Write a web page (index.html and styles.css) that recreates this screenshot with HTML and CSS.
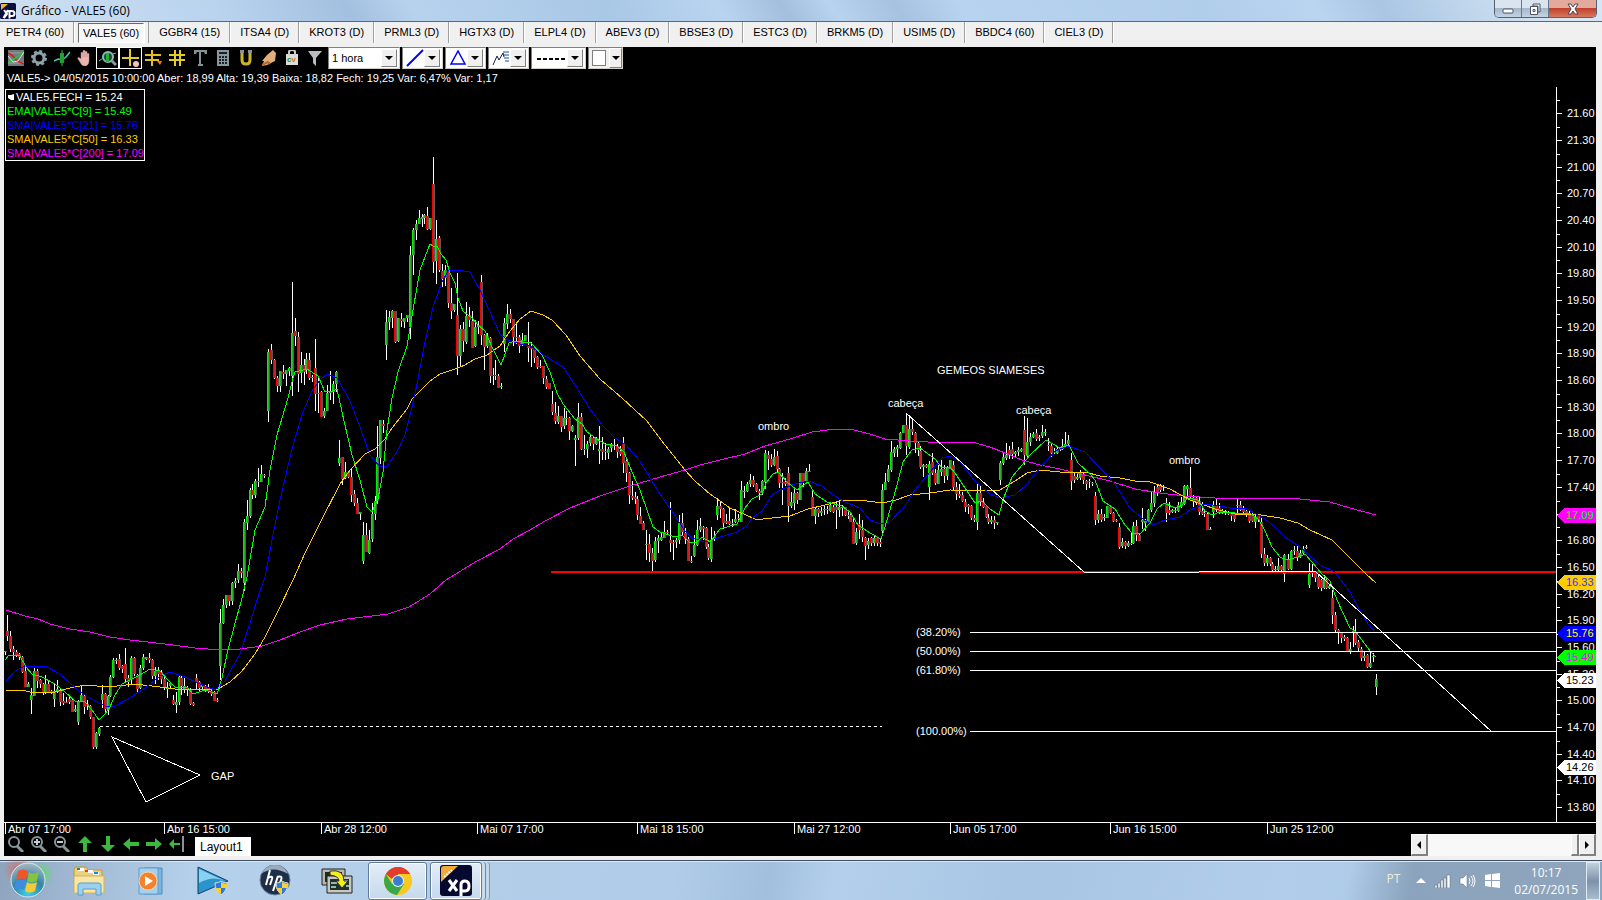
FILE: index.html
```html
<!DOCTYPE html>
<html lang="pt-BR">
<head>
  <meta charset="UTF-8" /><meta name="viewport" content="width=device-width, initial-scale=1.0" />
  <title>Gráfico - VALE5 (60)</title>
  <link rel="stylesheet" href="styles.css">
</head>
<body>
  <header class="titlebar">
    <svg class="xp-logo" width="16" height="16" viewBox="0 0 32 32"><rect width="32" height="32" rx="3" fill="#0b0f3c"/><path d="M2 14V2h14z" fill="#f0b43c"/><path d="M8 14l6 8-6 8M16 14l-9 16M19 31V16h5a5 5 0 010 10h-5" fill="none" stroke="#fff" stroke-width="4"/></svg>
    <h1>Gráfico - VALE5 (60)</h1>
    <div class="winbtns">
      <button aria-label="Minimizar"><svg width="12" height="12"><rect x="1" y="6" width="10" height="4" rx="1" fill="#fff" stroke="#4a5565"/></svg></button>
      <button aria-label="Restaurar"><svg width="12" height="12"><path d="M4 1h7v8H9V3H4z" fill="#fff" stroke="#4a5565"/><path d="M1.500 3.500h7v8h-7zM4 6.500h2v2H4z" fill="#fff" stroke="#4a5565"/></svg></button>
      <button class="close" aria-label="Fechar"><svg width="14" height="12"><path d="M2 1h3l2 3 2-3h3L9 6l3 5H9L7 8l-2 3H2l3-5z" fill="#fff" stroke="#4a4555"/></svg></button>
    </div>
  </header>

  <nav class="tabs">
    <button>PETR4 (60)</button>
    <button class="active">VALE5 (60)</button>
    <button>GGBR4 (15)</button>
    <button>ITSA4 (D)</button>
    <button>KROT3 (D)</button>
    <button>PRML3 (D)</button>
    <button>HGTX3 (D)</button>
    <button>ELPL4 (D)</button>
    <button>ABEV3 (D)</button>
    <button>BBSE3 (D)</button>
    <button>ESTC3 (D)</button>
    <button>BRKM5 (D)</button>
    <button>USIM5 (D)</button>
    <button>BBDC4 (60)</button>
    <button>CIEL3 (D)</button>
  </nav>

  <main class="panel">
    <div class="toolbar">
      <button aria-label="Gráfico"><svg width="16" height="16"><rect width="16" height="16" fill="#6f7b80"/><path d="M0 3h16M0 13h16" stroke="#9aa5aa"/><path d="M0 3l4 2 5 6 7 3" fill="none" stroke="#e11" stroke-width="1.500"/><path d="M0 12l5-2 5-4 6-4" fill="none" stroke="#2c2" stroke-width="1.500"/><path d="M0 6l5 6 5-1 6-9" fill="none" stroke="#ddd"/></svg></button>
      <button aria-label="Configurar"><svg width="16" height="16"><circle cx="8" cy="8" r="5" fill="none" stroke="#8fa3ad" stroke-width="3"/><circle cx="8" cy="8" r="7" fill="none" stroke="#8fa3ad" stroke-width="2" stroke-dasharray="3 2.500"/></svg></button>
      <button aria-label="Candle"><svg width="16" height="16"><path d="M0 11l4-2 4 1 4-3 4-5" fill="none" stroke="#3ad0c0" stroke-width="1.500"/><path d="M8 0v16" stroke="#3b4"/><rect x="6" y="3" width="4" height="10" fill="#1fa030"/></svg></button>
      <button aria-label="Mover"><svg width="16" height="16"><path d="M4 9V3c0-1 2-1 2 0V1c0-1 2-1 2 0v1c0-1 2-1 2 0v2c0-1 2-1 2 0v7c0 3-2 5-4 5-3 0-4-2-5-4L1 9c-1-2 1-2 3 0z" fill="#e9b6b2" stroke="#c58884" stroke-width=".5"/><path d="M6 3v4M8 2v5M10 4v3" stroke="#b9807c" stroke-width=".6"/></svg></button>
      <button class="on" aria-label="Zoom do candle"><svg width="18" height="16"><circle cx="9" cy="7" r="5" fill="#27414a" stroke="#8ba" stroke-width="2"/><path d="M13 11l4 4" stroke="#8a9aa0" stroke-width="3"/><path d="M0 11l4-3M14 4l3-1" stroke="#3ad0c0"/><rect x="7" y="3" width="3" height="9" fill="#24b034"/></svg></button>
      <button class="on" aria-label="Cruz"><svg width="18" height="18"><path d="M8 0v17M0 9h17" stroke="#e3cf2c" stroke-width="2"/><circle cx="14" cy="15" r="3" fill="#eec4c0"/></svg></button>
      <button aria-label="Linhas"><svg width="18" height="16"><path d="M7 0v16M0 5h16M0 10h14" stroke="#e3bf22" stroke-width="2"/><path d="M12 11h5l-2 4z" fill="#f71"/></svg></button>
      <button aria-label="Grade"><svg width="16" height="16"><path d="M6 0v16M11 0v16M0 5h16M0 10h16" stroke="#e3cf22" stroke-width="2"/></svg></button>
      <button aria-label="Texto"><svg width="16" height="16"><path d="M2 0h13v4h-2l-1-2H9v12h2v2H6v-2h1V2H5L4 4H2z" fill="#849298"/></svg></button>
      <button aria-label="Calculadora"><svg width="14" height="16"><rect x="1" width="12" height="16" fill="#8b979c"/><path d="M3 2h8v2H3zM3 6h2v2H3zM6 6h2v2H6zM9 6h2v2H9zM3 9h2v2H3zM6 9h2v2H6zM9 9h2v2H9zM3 12h2v2H3zM6 12h2v2H6zM9 12h2v2H9z" fill="#182226"/></svg></button>
      <button aria-label="Ímã"><svg width="14" height="16"><path d="M3 3v7q0 4 4 4t4-4V3" fill="none" stroke="#cfb526" stroke-width="3"/><path d="M1 0h4v3H1zM9 0h4v3H9z" fill="#8a9194"/></svg></button>
      <button aria-label="Apagar"><svg width="16" height="16"><path d="M1 11l5-6 6-5 3 3-1 8-8 4-5 1 2-5z" fill="#e3ae7a"/><path d="M1 15l6-3 2 2" fill="none" stroke="#b06a30" stroke-width="2"/></svg></button>
      <button class="sale" aria-label="Compra e venda"><svg width="14" height="16"><path d="M1 4h12v11H1z" fill="#dcdcd6"/><path d="M4 5V2q0-2 3-2t3 2v3" fill="none" stroke="#ccc" stroke-width="2"/></svg><span><b>c</b><i>v</i></span></button>
      <button aria-label="Filtro"><svg width="16" height="16"><path d="M1 1h14L9 8v8l-3-3V8z" fill="#b9bdbf"/></svg></button>
      <label class="combo period"><select aria-label="Período"><option>1 hora</option></select><i class="arrow"></i></label>
      <button class="combo" aria-label="Linha"><svg width="18" height="18"><path d="M1 17L17 1" stroke="#00f" stroke-width="2"/></svg><i class="arrow"></i></button>
      <button class="combo" aria-label="Forma"><svg width="18" height="18"><path d="M2 15h14L9 2z" fill="none" stroke="#00f" stroke-width="1.500"/></svg><i class="arrow"></i></button>
      <button class="combo" aria-label="Estudo"><svg width="18" height="18"><path d="M1 16l4-9 2 4 4-7 1 4" fill="none" stroke="#124" /><path d="M11 3h6M12 6h5M12 9h5M13 12h4" stroke="#124a9c"/></svg><i class="arrow"></i></button>
      <button class="combo wide" aria-label="Traço"><svg width="32" height="18"><path d="M2 10h30" stroke="#000" stroke-width="2" stroke-dasharray="4 2"/></svg><i class="arrow"></i></button>
      <button class="combo color" aria-label="Cor"><span class="swatch"></span><i class="arrow"></i></button>
    </div>
    <p class="quote">VALE5-&gt; 04/05/2015 10:00:00 Aber: 18,99 Alta: 19,39 Baixa: 18,82 Fech: 19,25 Var: 6,47% Var: 1,17</p>

    <div class="chart">
      <svg id="plot" viewBox="4 86 1592 748"></svg>
      <ul class="legend">
        <li><svg width="9" height="10"><path d="M1 3h3l3-1v6H4L1 6z" fill="#fff"/></svg>VALE5.FECH = 15.24</li>
        <li class="ema9">EMA|VALE5*C[9] = 15.49</li>
        <li class="sma21">SMA|VALE5*C[21] = 15.76</li>
        <li class="sma50">SMA|VALE5*C[50] = 16.33</li>
        <li class="sma200">SMA|VALE5*C[200] = 17.09</li>
      </ul>
    </div>

    <div class="bottombar">
      <button aria-label="Lupa"><svg width="17" height="16"><circle cx="7" cy="6" r="5" fill="none" stroke="#8a9599" stroke-width="2"/><path d="M10 10l6 6" stroke="#8a9599" stroke-width="3"/></svg></button>
      <button aria-label="Aumentar"><svg width="17" height="16"><circle cx="7" cy="6" r="5" fill="none" stroke="#8a9599" stroke-width="2"/><path d="M10 10l6 6" stroke="#8a9599" stroke-width="3"/><path d="M4 6h6M7 3v6" stroke="#c3cccf" stroke-width="2"/></svg></button>
      <button aria-label="Diminuir"><svg width="17" height="16"><circle cx="7" cy="6" r="5" fill="none" stroke="#8a9599" stroke-width="2"/><path d="M10 10l6 6" stroke="#8a9599" stroke-width="3"/><path d="M4 6h6" stroke="#c3cccf" stroke-width="2"/></svg></button>
      <button aria-label="Subir"><svg width="16" height="16"><path d="M8 0l7 7h-5v9H6V7H1z" fill="#3db83f"/></svg></button>
      <button aria-label="Descer"><svg width="16" height="16"><path d="M8 16l7-7h-5V0H6v9H1z" fill="#3db83f"/></svg></button>
      <button aria-label="Esquerda"><svg width="16" height="16"><path d="M0 8l7-6v4h9v4H7v4z" fill="#3db83f"/></svg></button>
      <button aria-label="Direita"><svg width="16" height="16"><path d="M16 8L9 2v4H0v4h9v4z" fill="#3db83f"/></svg></button>
      <button aria-label="Fim"><svg width="16" height="16"><path d="M0 8l5-5v4h6v2H5v4z" fill="#3db83f"/><path d="M14 0v16" stroke="#8a9599" stroke-width="2"/></svg></button>
      <button class="layout">Layout1</button>
      <div class="scroll">
        <button aria-label="Rolar à esquerda"><svg width="6" height="8"><path d="M5 0v8L1 4z"/></svg></button>
        <span class="thumb"></span>
        <button aria-label="Rolar à direita"><svg width="6" height="8"><path d="M1 0v8l4-4z"/></svg></button>
      </div>
    </div>
  </main>

  <footer class="taskbar">
    <button class="start" aria-label="Iniciar"><svg width="56" height="39" viewBox="0 0 56 39">
      <defs>
        <radialGradient id="orb" cx=".5" cy=".9" r=".9"><stop offset="0" stop-color="#3fd0e8"/><stop offset=".5" stop-color="#2f86a8"/><stop offset="1" stop-color="#a9b9c4"/></radialGradient>
        <radialGradient id="glow"><stop offset="0" stop-color="#f05030"/><stop offset="1" stop-color="#f05030" stop-opacity="0"/></radialGradient>
        <radialGradient id="glow2"><stop offset="0" stop-color="#40f040"/><stop offset="1" stop-color="#40f040" stop-opacity="0"/></radialGradient>
      </defs>
      <circle cx="18" cy="9" r="16" fill="url(#glow)" opacity=".6"/><circle cx="40" cy="13" r="13" fill="url(#glow2)" opacity=".7"/>
      <circle cx="27" cy="19" r="17" fill="url(#orb)" stroke="#dbe8ee"/>
      <path d="M17 10q5-3 10 0l-2 9q-5-3-10 0z" fill="#f0562a"/><path d="M28 11q4 3 10 0l-2 9q-6 3-10 0z" fill="#84c440"/>
      <path d="M15 20q5-3 10 0l-2 9q-5-3-10 0z" fill="#3e8ee0"/><path d="M26 21q4 3 10 0l-2 9q-6 3-10 0z" fill="#fac832"/>
    </svg></button>
    <button class="app" aria-label="Explorador"><svg width="32" height="30"><path d="M1 4q0-3 3-3h9l2 3h14v22H1z" fill="#ecd07c" stroke="#c09840"/><path d="M5 2h6v3H5zM15 4h5v3h-5zM20 6h6v3h-6z" fill="#fff"/><path d="M4 2h3v2H4z" fill="#1a9a3a"/><path d="M12 4h3v2h-3z" fill="#e33"/><path d="M21 6h4v2h-4z" fill="#28c"/><path d="M1 10h30v17H1z" fill="#f7e6a6" stroke="#d3b35c"/><path d="M5 29V19q0-2 3-2h17q3 0 3 2v10h-5v-6H10v6z" fill="#9cd0ee" stroke="#5d9dc8"/></svg></button>
    <button class="app" aria-label="Media Player"><svg width="32" height="30"><path d="M9 2h18v26H9z" fill="#7fb4dc" stroke="#4a8cc0"/><path d="M4 2h19v26H4z" fill="#a8d0ee" stroke="#5a9ccc"/><circle cx="13" cy="15" r="9" fill="#f5812a" stroke="#fbd2a8"/><path d="M10 10l8 5-8 5z" fill="#fff"/></svg></button>
    <button class="app" aria-label="Player"><svg width="32" height="30"><path d="M1 1l30 14L1 28z" fill="#2a94cc" stroke="#1b3f60"/><path d="M2 3l26 12q-12-6-26 2z" fill="#8ad0f0"/><path d="M18 17q4 0 6-2 3 2 6 2 0 8-6 12-6-4-6-12z" fill="#2a7ae0" stroke="#ddd"/><path d="M24 16v6h5.500q1-2 1-4-3 0-6.500-2zM18.500 22H24v6q-5-2-5.500-6z" fill="#f8d030"/></svg></button>
    <button class="app" aria-label="HP"><svg width="32" height="32"><circle cx="16" cy="15" r="15" fill="#1d2f48" stroke="#6c7f96"/><path d="M2 9q12-9 27 0-4-9-13-9T2 9z" fill="#9aacbe"/><path d="M11 5L7 20M9 13q5-3 4 1l-2 6M19 11l-5 15M18 12q6-2 4 3-1 5-6 4" fill="none" stroke="#fff" stroke-width="2"/><path d="M17 18q4 0 6-2 3 2 6 2 0 8-6 12-6-4-6-12z" fill="#2a7ae0" stroke="#ddd"/><path d="M23 17v6h5.500q1-2 1-4-3 0-6.500-2zM17.500 23H23v6q-5-2-5.500-6z" fill="#f8d030"/></svg></button>
    <button class="app" aria-label="Conexão"><svg width="32" height="28"><path d="M1 2h23v16H1z" fill="#b8b8b0" stroke="#222"/><path d="M4 5h17v10H4z" fill="#1b2b22"/><path d="M6 9h25v17H6z" fill="#c8c8c0" stroke="#222"/><path d="M9 12h19v11H9z" fill="#1b3328"/><path d="M10 16h6M10 20h5M23 14h4M25 19h3" stroke="#cdd" stroke-width="1.500"/><path d="M9 4q14-2 14 10h4l-6 7-6-7h3q0-5-9-6z" fill="#f7ee20" stroke="#333"/></svg></button>
    <button class="app open" aria-label="Chrome"><svg width="30" height="30" viewBox="0 0 30 30"><circle cx="15" cy="15" r="14" fill="#f6c820"/><path d="M15 15L2.900 8A14 14 0 0127.100 8H15z" fill="#e33b2e"/><path d="M2.900 8A14 14 0 0014 29l7-11-6-3-6 3z" fill="#3aa648"/><path d="M2.900 8A14 14 0 0127.100 8H15q-5 1-6 5z" fill="#e33b2e"/><circle cx="15" cy="15" r="6" fill="#eef3f8"/><circle cx="15" cy="15" r="5" fill="#3a7cd4"/></svg></button>
    <button class="app open stack" aria-label="XP"><svg width="32" height="32" viewBox="0 0 32 32"><rect width="32" height="31" rx="3" fill="#06092e"/><path d="M1 17V4q0-3 3-3h14z" fill="#f0ab38"/><path d="M4 12l8-7" stroke="#fff" stroke-width="2" stroke-dasharray="2 1"/><path d="M9 15l8 11M17 15L9 26M21 31V20q0-4 4-4t4 5-4 5h-3" fill="none" stroke="#fff" stroke-width="3"/></svg></button>
    <div class="tray">
      <span class="lang">PT</span>
      <svg width="10" height="6"><path d="M0 5h10L5 0z" fill="#fff"/></svg>
      <svg width="17" height="14"><path d="M1 11h2v3H1zM4 9h2v5H4zM7 6h2v8H7zM10 4h2v10h-2zM13 1h3v13h-3z" fill="#fff" stroke="#5d6b7a" stroke-width=".5"/></svg>
      <svg width="17" height="16"><path d="M1 5h3l4-4v14l-4-4H1z" fill="#fff" stroke="#5d6b7a" stroke-width=".5"/><path d="M10 5q2 3 0 6M12 3q4 5 0 10M14 2q4 6 0 12" fill="none" stroke="#fff"/></svg>
      <svg width="17" height="17"><path d="M1 3l6-1v6H1zM8 2l8-1v7H8zM1 9h6v6l-6-1zM8 9h8v7l-8-1z" fill="#fff"/></svg>
      <time class="clock">10:17<br>02/07/2015</time>
      <button class="desktop" aria-label="Mostrar área de trabalho"></button>
    </div>
  </footer>

  <script src="chart.js"></script>
</body>
</html>
```
FILE: styles.css
```css
* { box-sizing: border-box; }
body { margin: 0; height: 100vh; display: flex; flex-direction: column; background: #f0f0f0; font: 11px "Liberation Sans", Arial, sans-serif; color: #000; overflow: hidden; }
button { font: inherit; color: inherit; border: 0; padding: 0; background: none; display: flex; align-items: center; justify-content: center; }
svg { flex: none; display: block; }

.titlebar { display: flex; height: 22px; flex: none; border-bottom: 1px solid #59677a; background: linear-gradient(60deg, #cfe0f2 0, #b9d3ee 14%, #a3c0e0 22%, #b7d2ed 26%, #a9c8e6 38%, #b9d4ef 45%, #a2bfdd 49%, #b8d3ee 52%, #a5c2e0 56%, #b7d3ef 60%, #b0cdea 75%, #b9d5f0 82%, #a9c6e3 86%, #d7e6f5 97%); }
.xp-logo { margin-top: 3px; }
.titlebar h1 { flex: 1; margin: 0 0 0 5px; font: 12px/21px "Open Sans", sans-serif; }
.winbtns { display: flex; height: 18px; margin-right: 5px; border: 1px solid #52606f; border-top: 0; border-radius: 0 0 5px 5px; overflow: hidden; }
.winbtns button { width: 27px; background: linear-gradient(#d9e4ef 45%, #a5b7ca 50%, #c3d3e2); border-right: 1px solid #66788a; }
.winbtns .close { width: 47px; border: 0; background: linear-gradient(#e3a99c 45%, #c0412b 50%, #d9775c); }

.tabs { display: flex; height: 25px; flex: none; padding-bottom: 4px; }
.tabs button { padding: 0 9px 2px; border-right: 1px solid #a0a0a0; box-shadow: 1px 0 #fff; }
.tabs button:first-child { padding-left: 6px; }
.tabs .active { margin: 1px 4px 0; padding: 0 4px; border: 1px solid #696969; border-right-color: #fff; border-bottom-color: #fff; background: #f8f8f8; }
.tabs .active + button { border-left: 1px solid #a0a0a0; }
.tabs .active ~ button { padding-left: 10px; }

.panel { flex: 1; min-height: 0; display: flex; flex-direction: column; margin: 0 6px 4px 4px; background: #000; color: #fff; }
.toolbar { display: flex; height: 23px; flex: none; }
.toolbar > button { width: 23px; height: 22px; }
.toolbar .on { border: 1px solid #fff; }
.sale { display: grid; }
.sale svg, .sale span { grid-area: 1 / 1; justify-self: center; }
.sale span { font: bold 8px/8px "Liberation Sans", sans-serif; padding-top: 3px; }
.sale b { color: #2a8a3a; }
.sale i { color: #d08020; font-style: normal; }
.toolbar .combo { display: flex; justify-content: space-between; width: 41px; height: 22px; margin-left: 2px; padding: 0 2px 0 3px; background: #fff; border: 1px solid #808080; border-right-color: #d4d0c8; border-bottom-color: #d4d0c8; color: #000; }
.toolbar .period { width: 72px; padding-left: 0; align-items: center; }
.toolbar .wide { width: 55px; }
.toolbar .color { width: 35px; background: #f0f0f0; padding: 0 0 0 3px; }
.period select { flex: 1; min-width: 0; appearance: none; border: 0; background: none; padding: 0 3px; font: 11px "Liberation Sans", sans-serif; color: #000; }
.arrow { width: 16px; height: 18px; flex: none; display: flex; align-items: center; justify-content: center; background: #f0f0f0; border: 1px solid #fff; border-right-color: #808080; border-bottom-color: #808080; }
.arrow::after { content: ""; border: 4px solid transparent; border-top-color: #000; border-bottom: 0; }
.color .arrow { width: 13px; height: 20px; }
.swatch { width: 14px; height: 16px; background: #fff; border: 1px solid #808080; }
.quote { margin: 0; height: 16px; flex: none; padding-left: 3px; line-height: 16px; }

.chart { position: relative; flex: 1; min-height: 0; }
.chart > svg { width: 100%; height: 100%; }
.chart text { fill: #fff; font: 11px "Liberation Sans", Arial, sans-serif; }
.chart line, .chart rect, .chart polyline, .chart polygon { shape-rendering: crispEdges; }
.legend { position: absolute; top: 3px; left: 1px; margin: 0; padding: 0 0 0 1px; list-style: none; border: 1px solid #fff; background: #000; line-height: 14px; }
.legend li { display: flex; align-items: center; }
.ema9 { color: #0f0; }
.sma21 { color: #00f; }
.sma50 { color: #fc0; }
.sma200 { color: #f0f; }

.bottombar { display: flex; height: 22px; flex: none; }
.bottombar > button { width: 23px; height: 20px; }
.bottombar .layout { width: auto; height: 19px; margin: 3px 0 0 7px; padding: 0 8px 0 5px; background: #fff; color: #000; font-size: 12px; }
.scroll { display: flex; width: 185px; margin-left: auto; background: #f8f8f8; }
.scroll button, .thumb { width: 17px; background: #f0f0f0; border: 1px solid #fff; border-right: 2px solid #808080; border-bottom: 2px solid #808080; }
.thumb { width: 8px; margin-left: auto; }

.taskbar { display: flex; height: 40px; flex: none; border-top: 1px solid #3f4f60; box-shadow: inset 0 1px #dbe8f5; background: linear-gradient(100deg, #8ea4bd 0, #9db5d0 4%, #b5d0ea 12%, #b0cce8 42%, #a2c0de 48%, #b3cfeb 52%, #a8c6e4 64%, #b1cdeb 80%, #aecbe8 84%, #8ba3bc 88%, #8fa5bd 100%); }
.start { width: 58px; }
.app { width: 62px; }
.app.open { width: 59px; margin: 1px 3px 0 0; border: 1px solid #5f7a96; border-radius: 3px; background: linear-gradient(#e3edf7, #c5d9ed); box-shadow: inset 0 0 0 1px #fff; }
.app.stack { width: 52px; box-shadow: inset 0 0 0 1px #fff, 3px 0 #c9dcee, 4px 0 #6f88a2, 7px 0 #c3d7ea, 8px 0 #8098b0; }
.tray { margin-left: auto; display: flex; align-items: center; color: #fff; gap: 8px; }
.lang { margin: 0 8px 4px 0; font: 12px "Open Sans", sans-serif; color: #e9eede; }
.clock { margin-left: 5px; text-align: center; font: 12px/17px "Open Sans", sans-serif; }
.desktop { width: 14px; height: 38px; margin-right: 2px; border: 1px solid #e0eaf3; background: linear-gradient(#c3d0dd, #7d92aa 50%, #a9bccf); }
```
FILE: chart.js
```js
const plot = document.getElementById('plot');

// each bar: colour, high, body top, body bottom, low
const BAR_STEP = 71 / 24;
const series = [
  [5, 'g 651 651 652 655'],
  [7, 'r 615 631 636 641,r 631 636 649 652,r 646 649 652 660,r 650 652 655 657,r 653 654 657 660,r 656 657 672 673,r 667 671 687 687,g 682 684 687 687,g 688 695 700 714,g 668 671 696 696,r 669 671 681 688,r 679 680 684 688,r 683 684 693 695,g 675 684 693 694,r 680 684 692 693,r 690 691 693 694,g 683 691 699 707,g 680 689 692 693,r 688 690 702 706,r 693 701 703 705,r 697 702 703 703,r 696 699 702 704'],
  [72, 'r 698 700 712 712,g 705 709 711 712,g 700 701 722 725,g 686 695 701 702,r 695 696 707 714,r 700 704 706 710,r 705 706 717 719,r 717 717 747 749,g 732 733 747 749,g 727 728 734 736,g 685 694 700 708,r 693 694 709 712,g 695 696 710 715,g 675 677 696 697,g 658 660 677 678,g 658 660 661 664,r 654 659 668 670,r 665 666 669 673,r 648 664 679 683,r 675 678 682 687,g 656 658 679 684,r 657 658 674 676,r 674 675 689 692,g 665 668 688 689'],
  [143, 'g 654 657 668 670,g 657 657 659 660,r 653 658 660 663,r 659 660 676 679,g 667 671 676 684,r 667 671 674 680,r 670 672 679 684,r 677 679 688 690,g 682 687 689 698,g 682 683 686 688,r 695 700 704 705,g 692 702 705 713,g 675 677 702 705,r 676 678 686 695,g 678 686 690 693,r 686 688 690 696,r 688 690 704 705,r 702 703 705 706,r 674 678 682 690,r 681 682 688 692,g 684 685 687 690,r 685 686 690 692,r 684 688 691 693,r 690 691 694 696'],
  [214, 'r 691 692 701 701,r 698 700 701 702,g 609 623 666 680,g 599 605 623 624,g 595 595 605 608,r 595 595 601 606,g 582 583 601 605,g 578 581 583 588,g 564 571 580 583,r 568 571 573 578,g 519 522 583 591,g 500 516 523 530,g 488 490 516 518,r 484 490 495 499,g 479 481 495 498,r 468 481 482 487,g 465 474 482 482,r 474 475 476 478'],
  [268, 'g 349 352 411 422,r 344 350 360 364,r 359 360 378 379,r 376 378 386 392,g 371 371 386 392,r 365 372 374 379,g 370 370 374 386,g 367 368 371 376,g 282 333 376 396,r 318 331 336 346,r 332 337 374 392,g 352 365 373 383,r 359 365 372 385,g 353 359 370 374,r 353 360 378 380,r 375 377 378 382,r 339 368 394 411,r 376 393 394 413,r 391 392 417 417,g 408 411 416 418,g 385 393 411 411,g 371 392 393 400,g 381 384 392 404,g 371 372 384 392'],
  [339, 'g 440 458 463 466,r 457 457 479 485,g 462 472 478 479,r 471 472 477 478,r 469 477 495 502,r 490 494 503 506,r 498 503 514 514,g 512 512 514 520,g 522 535 561 564,r 523 535 552 552,g 530 540 553 554,g 503 514 539 542,g 496 501 514 520,g 426 457 501 504,g 420 420 458 464,r 420 424 426 433'],
  [386, 'g 310 322 345 360,g 311 317 322 330,g 310 311 318 328,r 311 311 342 343,g 318 318 341 342,r 313 319 321 327,g 318 318 322 328,g 315 315 318 322,g 246 255 327 339,g 228 230 255 275,g 220 224 230 240,g 210 218 224 224,g 214 217 219 227,g 214 215 218 224,r 207 216 229 230,g 218 218 229 230,r 157 184 262 273,g 220 239 261 284,r 236 238 270 272,r 264 271 279 287,g 265 270 278 286,r 270 271 303 308,r 288 303 311 319,g 304 304 310 312'],
  [457, 'r 273 315 356 375,g 325 329 356 366,r 322 329 341 352,g 302 316 342 344,r 307 315 320 327,r 311 321 348 348,g 320 327 346 347,g 321 325 327 334,r 275 282 335 345,r 334 335 347 370,g 333 336 346 348,r 337 338 376 383,r 368 375 376 385,r 360 375 376 380,r 374 376 388 388,g 383 386 387 389,g 318 323 344 352,g 304 314 324 329,r 309 314 319 323,r 319 319 337 346,r 323 337 338 344,r 335 337 346 353,g 333 340 345 346,g 335 335 341 341'],
  [528, 'r 322 346 348 362,r 342 348 349 367,r 349 349 358 363,r 356 357 367 369,r 360 366 367 368,r 366 366 378 384,r 376 379 387 389,r 383 383 389 389,r 391 404 412 415,r 402 413 421 424,g 406 416 422 424,r 416 416 427 432,g 408 418 426 429,g 411 418 419 425,r 417 418 431 440,g 425 426 431 432,g 435 438 440 466,g 403 417 438 440,r 413 417 449 450,r 435 449 450 455,g 441 444 449 458,g 434 437 443 446,r 436 438 444 450,g 437 438 444 445'],
  [599, 'g 426 449 451 464,r 437 449 452 460,r 443 451 452 460,g 447 449 453 459,g 443 444 448 452,r 439 445 446 450,r 444 446 452 458,r 446 451 454 456,r 437 444 463 473,r 458 461 473 482,r 472 473 495 504,r 481 496 498 500,r 492 497 499 504,r 496 499 515 520,r 507 516 524 524,r 521 523 530 530,g 530 544 545 560,r 534 544 553 562,r 548 553 561 571,g 537 541 560 562,g 535 538 541 553,g 533 537 540 541,g 521 532 538 538,r 530 532 533 535'],
  [670, 'r 502 540 543 552,r 540 542 543 560,g 538 540 542 548,g 515 523 540 544,r 513 523 532 535,r 528 533 539 544,r 537 539 561 561,r 556 561 562 563,g 535 545 556 557,g 520 530 545 546,g 518 526 530 532,r 526 527 529 540,r 527 528 547 549,r 544 547 558 560,g 527 540 559 562,g 531 537 539 541,g 498 506 515 520,r 502 506 509 518,r 508 509 523 529,r 514 521 523 524,r 508 521 524 525,r 519 523 524 527,g 509 519 522 523,r 514 518 519 522'],
  [741, 'g 481 490 522 522,g 486 491 492 498,g 482 484 491 492,g 474 480 484 487,r 476 480 485 487,r 483 484 491 492,r 489 491 493 500,g 480 481 493 495,g 450 453 482 489,r 451 455 459 470,r 454 459 465 467,g 449 457 465 466,r 451 456 469 472,r 468 469 483 488,r 473 482 483 505,r 478 482 484 486,r 467 473 506 522,g 492 502 506 508,g 489 493 503 510,r 492 493 500 504,g 473 473 500 500,r 473 473 482 487,g 468 471 482 483,g 464 471 472 472'],
  [812, 'r 490 497 516 516,g 508 509 516 524,r 508 509 513 517,g 507 511 513 516,g 505 509 510 515,r 506 509 510 514,g 504 505 511 512,r 505 507 512 513,r 501 507 510 529,g 500 507 510 517,g 505 507 508 516,r 507 507 515 516,r 510 515 516 519,r 514 515 522 522,r 518 522 544 544,g 528 532 543 545,r 514 524 530 539,r 520 530 537 542,r 537 538 546 560,g 538 541 545 549,r 537 538 543 546,g 535 538 543 546,r 537 538 543 546,r 538 542 544 547'],
  [882, 'g 484 490 531 536,g 473 482 490 490,g 465 469 481 482,g 441 452 470 472,g 447 449 453 457,g 445 447 449 457,g 432 433 448 449,g 425 425 433 433,r 413 425 446 455,g 416 429 447 449,r 418 429 432 435,r 432 433 443 453,r 442 443 450 456,r 446 451 467 469,g 464 465 467 477,r 464 465 467 468,g 461 464 487 500,r 453 462 473 475,r 469 473 483 485,g 465 470 484 484,g 460 469 472 476,r 465 469 476 483,g 466 468 476 480'],
  [950, 'g 460 460 469 469,r 461 465 487 490,r 482 487 494 500,r 484 494 496 498,r 492 495 501 502,r 499 502 507 512,r 504 505 507 514,r 505 506 518 520,r 515 518 520 522,g 483 493 522 530,r 485 493 502 506,r 498 502 507 508,r 505 506 517 518,r 514 518 522 524,g 516 520 522 524,r 516 520 523 529,g 522 522 523 525,g 461 463 480 485,g 453 457 463 465,g 443 455 458 460,r 446 450 455 459,r 442 449 454 459,g 451 452 454 457,g 447 450 452 456,g 448 449 451 452'],
  [1024, 'r 416 430 455 465,g 418 442 456 457,g 433 437 442 446,g 432 434 437 438,r 429 433 439 441,g 435 437 438 441,g 425 432 436 438,g 429 432 433 436,r 438 445 446 451,r 444 446 453 457,g 448 452 453 454,g 447 449 453 454,g 447 448 450 451,g 439 446 449 450,g 432 444 446 447,g 435 440 444 446,r 453 460 481 490,r 472 476 480 483,g 473 477 479 480,g 470 472 478 480,r 473 475 480 484,r 480 481 484 490,r 479 481 482 488,r 482 483 484 486'],
  [1095, 'r 492 496 520 525,g 510 514 520 523,r 509 514 520 522,g 514 517 518 521,g 506 506 518 518,r 506 507 513 514,r 512 513 521 522,r 519 520 521 522,r 523 527 547 549,g 538 542 546 548,r 541 542 546 549,g 541 543 546 547,r 533 543 544 545,g 522 526 543 544,r 520 526 535 541,r 533 535 541 541,g 508 520 522 529,g 519 521 523 531,g 509 510 522 522,g 491 503 510 512,g 486 492 503 507,r 484 487 492 496,r 484 486 490 492,r 485 486 487 491'],
  [1166, 'r 498 503 513 522,r 502 510 513 515,g 509 510 512 513,g 507 510 511 513,g 502 505 511 512,g 497 502 507 508,g 485 486 504 505,g 485 486 489 498,r 467 488 497 498,r 495 498 502 507,r 497 498 503 505,r 497 501 512 515,r 502 511 514 515,r 511 513 514 517,r 513 514 530 530,g 527 529 530 530,g 501 505 512 518,r 499 505 509 512,r 503 508 512 514,r 509 511 513 514,r 510 511 513 515,r 511 512 514 515,r 512 513 516 521'],
  [1234, 'r 513 514 519 522,g 499 505 506 513,r 501 505 510 511,r 506 509 512 515,r 510 511 514 517,r 511 513 521 523,r 512 514 521 522,g 514 517 522 528,r 514 516 520 522,r 518 522 554 558,r 548 554 563 566,g 555 558 563 566,r 557 558 564 566,r 562 564 570 571,g 566 569 570 571,g 558 566 570 571,r 565 566 570 571,g 554 555 574 582'],
  [1288, 'r 554 559 569 570,g 550 551 569 570,g 546 550 551 555,r 546 551 558 561,g 550 553 557 558,g 546 549 553 554,g 545 547 548 549,g 563 574 585 588,r 564 572 573 577,r 571 572 578 582,r 575 577 587 589,r 579 580 588 591,g 575 579 588 589,r 578 580 588 589,g 585 586 588 589,r 590 598 615 624,r 612 615 630 633,r 629 630 633 644,r 632 633 638 643,r 635 637 639 641,r 637 638 651 651,g 642 649 651 654,g 626 631 633 647'],
  [1355, 'r 619 632 643 645,r 640 642 648 652,r 647 649 658 661,g 652 656 658 661,r 654 655 667 668,g 651 663 667 668,g 653 656 657 662,g 674 679 687 695']
];

const averages = {
  '#f0f': '6,610 25,616 38,619 50,624 70,629 90,632 110,637 130,640 165,644 195,648 220,650 240,649 262,646 280,640 300,632 320,625 347,619 388,614 409,607 430,594 446,580 477,561 500,549 513,539 530,530 545,521 570,508 600,496 630,486 660,477 685,470 700,465 720,460 745,454 765,446 790,439 812,432 835,429 850,429 870,434 885,439 910,441 945,443 972,442 990,447 1005,453 1022,460 1040,465 1060,469 1085,475 1110,481 1135,489 1160,493 1185,496 1215,498 1272,498 1300,499 1330,502 1350,508 1376,515',
  '#fc0': '6,690 23,690 33,693 55,692 70,688 85,685 108,687 135,684 160,687 175,689 200,690 218,689 230,682 242,671 255,654 265,637 278,611 293,580 305,553 320,523 340,484 350,470 365,454 375,449 385,439 392,428 407,409 412,399 420,391 430,381 440,374 455,369 465,365 475,359 487,355 500,346 510,331 520,319 531,311 543,315 552,320 566,335 580,356 600,379 622,398 647,421 665,445 685,470 695,481 710,494 730,508 755,519 763,519 790,516 808,509 825,505 840,501 860,500 882,503 896,500 910,495 930,493 950,490 998,491 1015,481 1027,473 1040,470 1060,472 1085,472 1100,476 1120,478 1135,481 1150,482 1170,489 1190,500 1215,509 1235,514 1261,515 1280,518 1298,523 1310,530 1332,540 1350,558 1365,573 1376,583',
  '#00f': '6,681 15,671 25,666 45,666 60,674 70,683 80,692 95,701 105,706 115,706 130,698 145,688 160,676 170,672 185,677 200,684 215,690 225,681 240,654 250,623 257,600 265,577 272,540 280,500 293,445 303,412 312,391 320,380 327,374 337,378 350,401 360,427 370,455 380,467 387,466 397,452 405,435 412,407 417,384 425,342 433,307 442,282 448,271 457,270 470,272 480,290 490,312 500,334 508,340 520,344 530,346 550,359 563,367 575,385 590,409 603,426 615,438 625,444 640,461 650,478 660,494 672,511 685,531 692,538 705,542 720,537 735,533 747,526 752,518 762,511 772,495 780,490 795,484 808,481 822,486 833,495 845,502 860,508 870,520 880,524 890,522 905,506 915,490 930,472 942,458 950,456 960,462 975,481 990,494 1000,498 1015,495 1027,484 1040,468 1055,451 1068,446 1085,452 1100,468 1115,484 1130,508 1142,518 1153,525 1165,520 1180,517 1190,510 1205,504 1220,506 1235,509 1245,508 1258,515 1265,519 1275,527 1285,537 1300,547 1320,565 1335,572 1350,592 1358,607 1368,624 1376,633',
  '#0f0': '5,660 9,655 20,656 26,667 32,674 42,677 55,684 65,692 75,701 85,702 92,710 99,720 105,714 110,707 115,695 122,684 132,679 140,675 150,669 160,671 168,680 175,687 188,688 193,694 205,690 217,694 222,678 227,654 235,623 241,602 247,577 255,530 265,507 270,470 277,435 288,398 293,378 295,372 307,369 318,376 325,392 333,391 337,389 344,421 352,455 360,480 367,507 372,512 378,499 383,472 387,430 392,398 398,372 407,346 413,310 420,270 430,244 434,247 437,246 441,254 446,260 450,273 455,283 458,298 463,311 472,318 478,325 485,331 492,347 501,365 509,343 515,341 531,343 542,355 550,372 557,393 563,404 575,419 582,424 587,432 597,439 605,444 617,446 624,452 632,472 640,490 647,510 653,527 660,532 675,537 682,535 690,543 697,542 702,537 710,542 720,529 737,524 745,508 752,499 762,494 766,483 773,474 778,472 787,482 797,490 808,482 815,494 827,502 842,506 850,512 858,525 870,533 881,539 884,530 890,510 897,485 903,462 912,450 920,448 935,459 942,468 950,467 955,473 965,488 975,503 982,501 990,509 999,515 1004,497 1012,477 1022,465 1030,455 1046,440 1060,448 1069,445 1078,463 1090,474 1095,480 1103,501 1115,509 1125,525 1132,533 1140,534 1150,523 1157,509 1164,503 1175,508 1182,505 1188,498 1198,500 1205,511 1212,515 1220,512 1235,513 1250,513 1259,520 1265,531 1272,547 1280,557 1287,560 1298,557 1305,554 1312,562 1322,574 1330,581 1337,600 1350,628 1355,631 1362,640 1370,651 1376,657'
};

let out = '';
const line = (x1, y1, x2, y2, c = '#fff', extra = '') => {
  out += `<line x1="${x1}" y1="${y1}" x2="${x2}" y2="${y2}" stroke="${c}" ${extra}/>`;
};
const rect = (x, y, w, h, c) => {
  out += `<rect x="${x}" y="${y}" width="${w}" height="${h}" fill="${c}"/>`;
};
const text = (x, y, s, c = '#fff') => {
  out += `<text x="${x}" y="${y}" style="fill:${c}">${s}</text>`;
};

// candles
series.forEach(([x0, bars]) => {
  bars.split(',').forEach((bar, i) => {
    const [c, hi, top, bot, lo] = bar.split(' ').map((v, k) => k ? +v : v);
    const x = x0 + Math.round(i * BAR_STEP);
    const h = Math.max(1, bot - top);
    rect(x, hi, 1, Math.max(1, lo - hi), '#fff');
    rect(x - 1, top, 1, h, c === 'g' ? '#00f000' : '#f00000');
    rect(x, top, 1, h, c === 'g' ? '#22b422' : '#c82020');
    rect(x + 1, top, 1, h, '#585858');
  });
});

// support, projections and notes
rect(551, 571, 1005, 2, '#f00');
for (const c in averages) out += `<polyline points="${averages[c]}" fill="none" stroke="${c}"/>`;
line(906, 413, 1084, 572);
rect(1084, 572, 115, 1, '#fff');
rect(1199, 571, 116, 1, '#fff');
line(1315, 571, 1491, 731);
[['(38.20%)', 632], ['(50.00%)', 651], ['(61.80%)', 670], ['(100.00%)', 731]].forEach(([s, y]) => {
  rect(970, y, 586, 1, '#fff');
  text(916, y + 4, s);
});
line(100, 726.5, 882, 726.5, '#fff', 'stroke-dasharray="3 3"');
out += '<polygon points="112,737 200,775 146,802" fill="none" stroke="#fff"/>';
text(211, 780, 'GAP');
text(937, 374, 'GEMEOS SIAMESES');
text(888, 407, 'cabeça');
text(1016, 414, 'cabeça');
text(758, 430, 'ombro');
text(1169, 464, 'ombro');

// price scale
rect(1556, 87, 1, 735, '#fff');
for (let i = 0; i <= 26; i++) {
  const y = Math.round(807 - i * 26.68);
  rect(1557, y, 5, 1, '#fff');
  rect(1557, y - 13, 3, 1, '#fff');
  text(1567, y + 4, (13.8 + i * 0.3).toFixed(2));
}
[['17.09', 515, '#f0f', '#0f0'], ['16.33', 582, '#fc0', '#33f'], ['15.76', 633, '#00f', '#ff0'],
 ['15.49', 657, '#0f0', '#f0f'], ['15.23', 680, '#fff', '#000'], ['14.26', 767, '#fff', '#000']].forEach(([s, y, bg, fg]) => {
  out += `<polygon points="1557,${y} 1564,${y - 7} 1596,${y - 7} 1596,${y + 8} 1564,${y + 8}" fill="${bg}"/>`;
  text(1566, y + 4, s, fg);
});

// time scale
rect(4, 822, 1592, 1, '#fff');
[[5, 'Abr 07 17:00'], [164, 'Abr 16 15:00'], [321, 'Abr 28 12:00'], [477, 'Mai 07 17:00'], [637, 'Mai 18 15:00'],
 [794, 'Mai 27 12:00'], [950, 'Jun 05 17:00'], [1110, 'Jun 16 15:00'], [1267, 'Jun 25 12:00']].forEach(([x, s]) => {
  rect(x, 823, 1, 11, '#fff');
  text(x + 3, 833, s);
});

plot.innerHTML = out;
```
